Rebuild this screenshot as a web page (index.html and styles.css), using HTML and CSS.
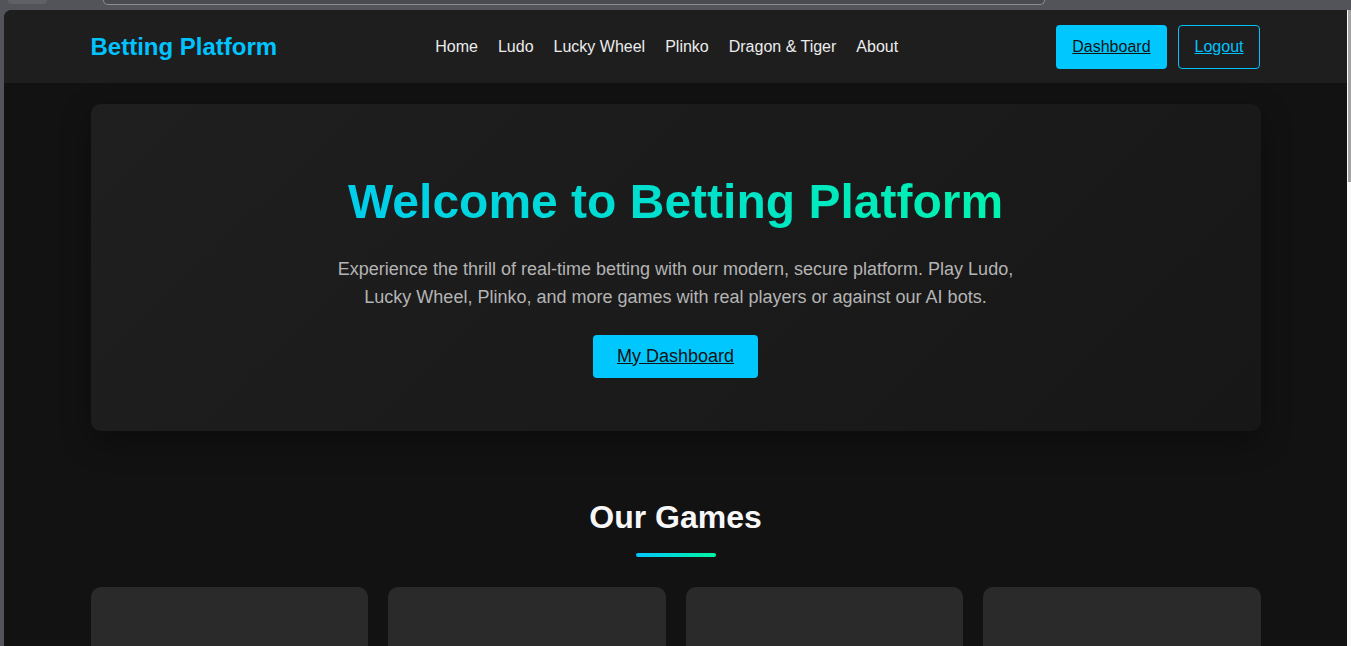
FILE: index.html
```html
<!DOCTYPE html>
<html lang="en">
<head>
    <meta charset="UTF-8">
    <meta name="viewport" content="width=device-width, initial-scale=1.0">
    <title>Betting Platform</title>
    <link rel="stylesheet" href="styles.css">
</head>
<body>

<!-- browser frame top -->
<div class="browser-top">
    <div class="tab-stub"></div>
    <div class="address-bar"></div>
</div>

<div class="browser-body">
    <div class="frame-left"></div>

    <div class="viewport">
        <header>
            <div class="container nav-bar">
                <a href="#" class="logo">Betting Platform</a>
                <nav class="menu">
                    <a href="#">Home</a>
                    <a href="#">Ludo</a>
                    <a href="#">Lucky Wheel</a>
                    <a href="#">Plinko</a>
                    <a href="#">Dragon &amp; Tiger</a>
                    <a href="#">About</a>
                </nav>
                <div class="auth-buttons">
                    <a href="#" class="btn btn-primary">Dashboard</a>
                    <a href="#" class="btn btn-outline">Logout</a>
                </div>
            </div>
        </header>

        <main class="container">
            <!-- hero -->
            <section class="hero">
                <h1>Welcome to Betting Platform</h1>
                <p>Experience the thrill of real-time betting with our modern, secure platform. Play Ludo, Lucky Wheel, Plinko, and more games with real players or against our AI bots.</p>
                <div class="hero-actions">
                    <a href="#" class="btn btn-primary btn-large">My Dashboard</a>
                </div>
            </section>

            <!-- games -->
            <section class="games">
                <h2 class="section-title">Our Games</h2>
                <div class="title-bar"></div>
                <div class="game-grid">
                    <div class="game-card"></div>
                    <div class="game-card"></div>
                    <div class="game-card"></div>
                    <div class="game-card"></div>
                </div>
            </section>
        </main>
    </div>

    <div class="scrollbar">
        <div class="scroll-thumb"></div>
    </div>
</div>

</body>
</html>
```

FILE: styles.css
```css
body {
    font-family: "Liberation Sans", Arial, sans-serif;
    background-color: #535459;
    margin: 0;
    padding: 0;
    height: 646px;
    overflow: hidden;
}

/* browser frame */
.browser-top {
    height: 10px;
    display: flex;
    align-items: flex-start;
}
.tab-stub {
    margin-left: 8px;
    width: 39px;
    height: 4px;
    background-color: #606166;
    border-radius: 0 0 4px 4px;
}
.address-bar {
    margin-left: 56px;
    width: 940px;
    height: 4px;
    background-color: #4a4b50;
    border: 1px solid #8c8d92;
    border-top: none;
    border-radius: 0 0 12px 12px;
}
.browser-body {
    display: flex;
    height: 636px;
}
.frame-left {
    width: 4px;
}
.viewport {
    flex: 1;
    background-color: #121212;
    border-top-left-radius: 8px;
    overflow: hidden;
    color: #e8e8e8;
}
.scrollbar {
    width: 4px;
    background-color: #fafafa;
    display: flex;
    justify-content: flex-end;
}
.scroll-thumb {
    width: 3px;
    height: 172px;
    background-color: #a3a3a3;
}

.container {
    max-width: 1170px;
    margin: 0 auto;
}

/* header */
header {
    background-color: #1e1e1e;
}
.nav-bar {
    display: flex;
    justify-content: space-between;
    align-items: center;
    height: 73px;
}
.logo {
    font-size: 1.5rem;
    font-weight: bold;
    color: #00c3ff;
    text-decoration: none;
}
.menu {
    display: flex;
    gap: 20px;
}
.menu a {
    color: #ececec;
    text-decoration: none;
    font-size: 1rem;
}
.auth-buttons {
    display: flex;
    gap: 11px;
}

/* buttons */
.btn {
    display: inline-block;
    font-size: 1rem;
    line-height: 20px;
    padding: 12px 16px;
    border-radius: 4px;
}
.btn-primary {
    background-color: #00c8ff;
    color: #121212;
}
.btn-outline {
    border: 1px solid #00c3ff;
    color: #00c3ff;
    padding: 11px 16px;
}
.btn-large {
    font-size: 18px;
    line-height: 19px;
    padding: 12px 24px;
}

/* hero */
.hero {
    margin-top: 21px;
    padding: 69px 40px 53px;
    background: linear-gradient(135deg, #1f1f1f, #171717);
    border-radius: 10px;
    box-shadow: 0 10px 30px rgba(0, 0, 0, 0.35);
    text-align: center;
}
.hero h1 {
    margin: 0 0 24px;
    font-size: 3rem;
    line-height: 1.2;
    background: linear-gradient(90deg, #00c2ff, #00ff9a);
    -webkit-background-clip: text;
    background-clip: text;
    color: transparent;
}
.hero p {
    max-width: 700px;
    margin: 0 auto 24px;
    font-size: 18px;
    line-height: 28px;
    color: #b4b4b4;
}
.hero-actions {
    display: flex;
    justify-content: center;
}

/* games */
.games {
    padding-top: 67px;
}
.section-title {
    margin: 0;
    font-size: 2rem;
    line-height: 1.2;
    text-align: center;
    color: #f7f7f7;
}
.title-bar {
    width: 80px;
    height: 4px;
    margin: 17px auto 30px;
    border-radius: 2px;
    background: linear-gradient(90deg, #00c6ff, #00f5a0);
}
.game-grid {
    display: grid;
    grid-template-columns: repeat(4, 1fr);
    gap: 20px;
}
.game-card {
    height: 200px;
    background-color: #2a2a2a;
    border-radius: 10px;
}
```
